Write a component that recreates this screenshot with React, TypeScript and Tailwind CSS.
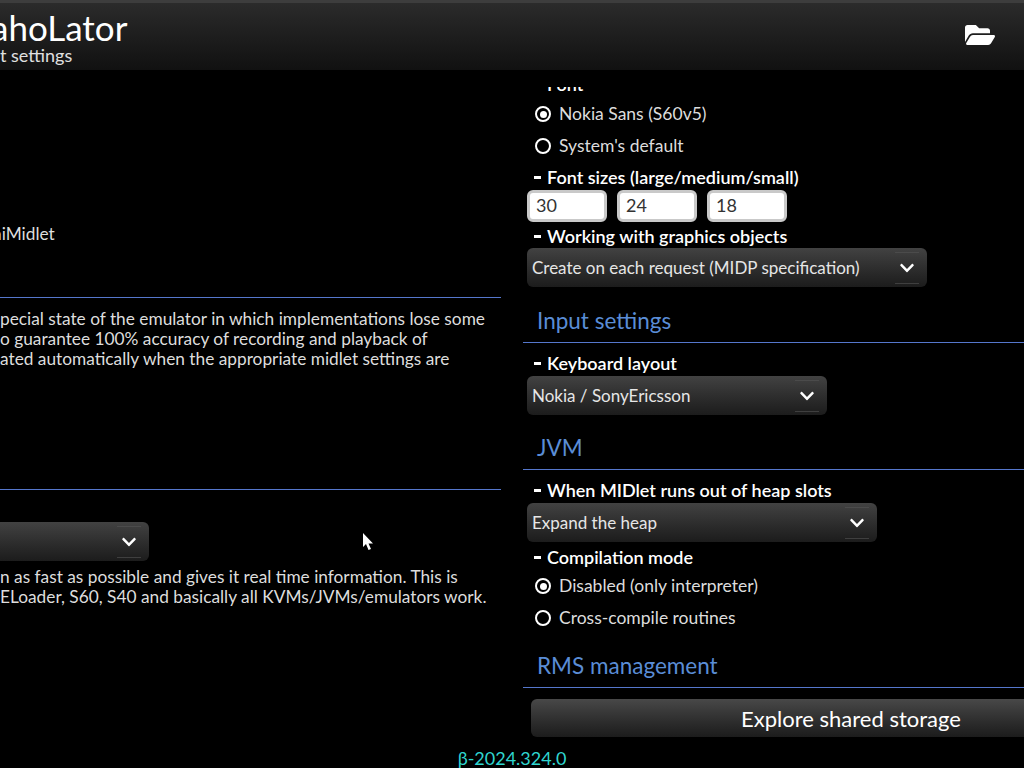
import { FaChevronDown, FaFolderOpen } from 'react-icons/fa';

function Label({ text, className }: { text: string; className: string }) {
  return (
    <div className={`flex items-center shrink-0 font-semibold text-[18px] text-white whitespace-nowrap ${className}`}>
      <span className="w-[7px] h-[3px] bg-white ml-[11px] mr-[6px]" />
      {text}
    </div>
  );
}

function Radio({ text, checked }: { text: string; checked?: boolean }) {
  return (
    <div className="flex items-center h-8 shrink-0 text-[17.5px] text-[#dddddd] whitespace-nowrap">
      <span className="flex items-center justify-center w-4 h-4 ml-3 mr-2 rounded-full border-2 border-white">
        {checked && <span className="w-[7px] h-[7px] rounded-full bg-white" />}
      </span>
      {text}
    </div>
  );
}

function Select({ text, className }: { text: string; className: string }) {
  return (
    <div className={`flex items-center justify-between h-[39px] shrink-0 rounded-md bg-gradient-to-b from-[#424242] to-[#1c1c1c] text-[17px] text-[#e6e6e6] whitespace-nowrap ${className}`}>
      <span className="pl-[5px]">{text}</span>
      <span className="flex items-center justify-center w-6 h-8 mr-2 border-y border-[#555555]/60 text-white">
        <FaChevronDown size={16} />
      </span>
    </div>
  );
}

function Section({ text, className }: { text: string; className: string }) {
  return (
    <div className={`flex items-end shrink-0 border-b border-[#5577cc] pb-1 pl-[14px] text-[22.5px] text-[#5a8dd6] whitespace-nowrap ${className}`}>
      {text}
    </div>
  );
}

function SizeInput({ value }: { value: string }) {
  return (
    <div className="flex items-center w-20 h-8 pl-[6px] pb-[2px] rounded-md border-[3px] border-[#c9c9c9] bg-white text-[18px] text-[#333333]">
      {value}
    </div>
  );
}

export default function App() {
  return (
    <div className="relative flex flex-col w-[1024px] h-[768px] overflow-hidden bg-black font-['Lato',sans-serif]">
      <header className="flex items-center justify-between h-[70px] shrink-0 border-t-[3px] border-[#3d3d3d] bg-gradient-to-b from-[#2b2b2b] to-[#111111]">
        <div className="text-white whitespace-nowrap">
          <div className="text-[35px] leading-[36px] -ml-[9px]">ahoLator</div>
          <div className="text-[18px] leading-[20px] text-[#e0e0e0]">t settings</div>
        </div>
        <FaFolderOpen size={30} className="mr-[29px] -mt-[3px] text-white" />
      </header>

      <main className="flex flex-1 min-h-0 mt-[10px] mb-[31px]">
        <section className="w-[501px] shrink-0 text-[17.3px] leading-5 text-[#dddddd] whitespace-nowrap">
          <div className="mt-[144px] -ml-[8px]">niMidlet</div>
          <div className="mt-[53px] border-t border-[#5577cc]" />
          <div className="mt-[11px]">
            <div>pecial state of the emulator in which implementations lose some</div>
            <div>o guarantee 100% accuracy of recording and playback of</div>
            <div>ated automatically when the appropriate midlet settings are</div>
          </div>
          <div className="mt-[120px] border-t border-[#5577cc]" />
          <Select text="" className="w-[149px] mt-8 rounded-l-none" />
          <div className="mt-[6px]">
            <div>n as fast as possible and gives it real time information. This is</div>
            <div>ELoader, S60, S40 and basically all KVMs/JVMs/emulators work.</div>
          </div>
        </section>

        <section className="flex flex-col flex-1 min-w-0 ml-[22px] mt-[7px] overflow-hidden">
          <Label text="Font" className="h-7 -mt-[17px]" />
          <Radio text="Nokia Sans (S60v5)" checked />
          <Radio text="System's default" />
          <Label text="Font sizes (large/medium/small)" className="h-7 pt-[2px]" />
          <div className="flex shrink-0 gap-[10px] ml-1">
            <SizeInput value="30" />
            <SizeInput value="24" />
            <SizeInput value="18" />
          </div>
          <Label text="Working with graphics objects" className="h-[26px] pt-[2px]" />
          <Select text="Create on each request (MIDP specification)" className="w-[400px] ml-1" />
          <Section text="Input settings" className="h-14" />
          <Label text="Keyboard layout" className="h-[33px] pt-[7px]" />
          <Select text="Nokia / SonyEricsson" className="w-[300px] ml-1" />
          <Section text="JVM" className="h-[55px]" />
          <Label text="When MIDlet runs out of heap slots" className="h-[33px] pt-[7px]" />
          <Select text="Expand the heap" className="w-[350px] ml-1" />
          <Label text="Compilation mode" className="h-7 pt-[2px]" />
          <Radio text="Disabled (only interpreter)" checked />
          <Radio text="Cross-compile routines" />
          <Section text="RMS management" className="h-[54px]" />
          <button className="w-[640px] h-[38px] shrink-0 mt-[11px] ml-2 rounded-md bg-gradient-to-b from-[#484848] to-[#1c1c1c] text-[22px] text-white">
            Explore shared storage
          </button>
        </section>
      </main>

      <footer className="absolute bottom-0 inset-x-0 text-center text-[18px] leading-5 text-[#2fd6d0]">β-2024.324.0</footer>

      <svg className="absolute left-[363px] top-[533px]" width="11" height="18" viewBox="0 0 11 18">
        <path d="M0 0 L0 14 L3 11 L5.5 17 L8 16 L5.5 10.5 L10 10.5 Z" fill="white" />
      </svg>
    </div>
  );
}
